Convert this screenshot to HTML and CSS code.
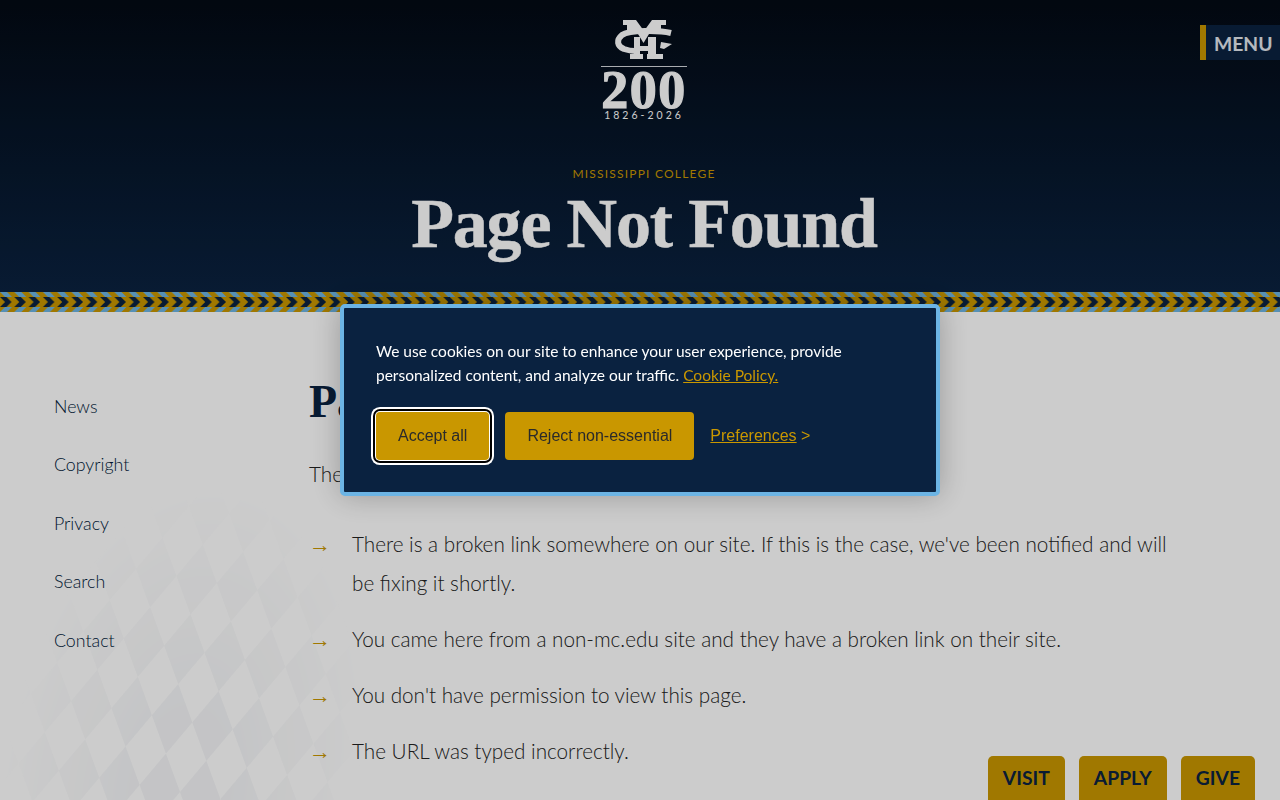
FILE: index.html
```html
<!DOCTYPE html>
<html lang="en">
<head>
  <meta charset="UTF-8">
  <title>Page Not Found - Mississippi College</title>
  <link rel="stylesheet" href="styles.css">
</head>
<body>
  <header class="hero">
    <a class="logo" href="#">
      <svg class="logo-mark" width="86" height="47" viewBox="0 0 86 47">
        <g fill="#fff">
          <path d="M22 0h13l8 11 8-11h14v5h-5v7H26V5h-4z"/>
          <path d="M33 17h6v9h8v-9h8v17h7v5H46v-5h1v-3h-8v3h3v5H29v-5h4z"/>
          <path d="M37 14h11l-5.500 9z"/>
          <path d="M60 22l11 2-8 5-4-1z"/>
          <rect x="0" y="46" width="86" height="1.400" fill="#d4d8dc"/>
        </g>
        <path d="M70 13C58 10 28 10 21 15c-6 5-5 11 2 14 3 1 6 2 11 2" fill="none" stroke="#fff" stroke-width="6"/>
      </svg>
      <div class="logo-years">200</div>
      <div class="logo-dates">1826-2026</div>
    </a>
    <div class="kicker">MISSISSIPPI COLLEGE</div>
    <h1>Page Not Found</h1>
    <a class="menu-btn" href="#">MENU</a>
  </header>

  <svg class="stripe" width="100%" height="20">
    <defs>
      <pattern id="chev" width="14.3" height="20" patternUnits="userSpaceOnUse">
        <rect width="14.3" height="20" fill="#c99700"/>
        <path d="M0 5h6.500l5 5-5 5H0l5-5z" fill="#0a2240"/>
        <path d="M0 0h7l5 5H5zM5 15h7l-5 5H0z" fill="#6cb4e4"/>
      </pattern>
    </defs>
    <rect width="100%" height="20" fill="url(#chev)"/>
  </svg>

  <div class="content">
    <div class="diamonds"></div>
    <nav class="side-nav">
      <a href="#">News</a>
      <a href="#">Copyright</a>
      <a href="#">Privacy</a>
      <a href="#">Search</a>
      <a href="#">Contact</a>
    </nav>
    <main class="main">
      <h2>Page Not Found</h2>
      <p>The page could not be found for one of these reasons:</p>
      <ul>
        <li>There is a broken link somewhere on our site. If this is the case, we've been notified and will be fixing it shortly.</li>
        <li>You came here from a non-mc.edu site and they have a broken link on their site.</li>
        <li>You don't have permission to view this page.</li>
        <li>The URL was typed incorrectly.</li>
      </ul>
    </main>
  </div>

  <div class="quick-links">
    <a href="#">VISIT</a>
    <a href="#">APPLY</a>
    <a href="#">GIVE</a>
  </div>

  <div class="overlay"></div>

  <div class="cookie-box">
    <p>We use cookies on our site to enhance your user experience, provide personalized content, and analyze our traffic. <a href="#">Cookie Policy.</a></p>
    <div class="cookie-actions">
      <button class="btn-focus">Accept all</button>
      <button>Reject non-essential</button>
      <span class="prefs"><a href="#">Preferences</a> &gt;</span>
    </div>
  </div>
</body>
</html>
```

FILE: styles.css
```css
* {
  box-sizing: border-box;
  margin: 0;
  padding: 0;
}
html, body {
  height: 800px;
  overflow: hidden;
}
body {
  background-color: #fff;
  color: #4a4a4a;
  font-family: 'Lato', sans-serif;
}
a {
  color: inherit;
  text-decoration: none;
}

.hero {
  position: relative;
  height: 292px;
  padding: 20px 0 0 8px;
  text-align: center;
  color: #fff;
  background: linear-gradient(to bottom, #030a14 0%, #0a2240 100%);
}
.logo {
  display: block;
  width: 86px;
  margin: 0 auto;
}
.logo-mark {
  display: block;
}
.logo-years {
  font-family: 'Liberation Serif', serif;
  font-weight: 700;
  font-size: 54px;
  line-height: 36px;
  margin-top: 5px;
  letter-spacing: 1.500px;
  -webkit-text-stroke: 1.2px #fff;
  white-space: nowrap;
}
.logo-dates {
  font-size: 10.500px;
  line-height: 12px;
  letter-spacing: 3px;
  margin-top: 1px;
  white-space: nowrap;
}
.kicker {
  margin-top: 46px;
  font-size: 12px;
  line-height: 14px;
  letter-spacing: 1.200px;
  color: #c99700;
}
h1 {
  font-family: 'Liberation Serif', serif;
  font-weight: 700;
  font-size: 70px;
  line-height: 80px;
  letter-spacing: -1.200px;
  margin-top: 3px;
  -webkit-text-stroke: 0.5px #fff;
}
.menu-btn {
  position: absolute;
  top: 25px;
  right: 0;
  width: 80px;
  height: 35px;
  padding-left: 8px;
  border-left: 6px solid #c99700;
  background-color: #0a2240;
  color: #e3e8ee;
  font-size: 19.300px;
  font-weight: 700;
  line-height: 37px;
  text-align: left;
}

.stripe {
  display: block;
}

.content {
  position: relative;
  display: grid;
  grid-template-columns: 255px 1fr;
  height: 488px;
  padding: 63px 100px 0 54px;
  overflow: hidden;
}
.diamonds {
  position: absolute;
  left: -320px;
  top: -20px;
  width: 1000px;
  height: 1000px;
  background: repeating-conic-gradient(#f5f6f8 0 25%, transparent 0 50%) 0 0 / 100px 100px;
  transform: rotate(10deg) scale(0.58, 1) rotate(45deg);
  -webkit-mask-image: radial-gradient(closest-side, #000 15%, transparent 62%);
  mask-image: radial-gradient(closest-side, #000 15%, transparent 62%);
}
.side-nav {
  position: relative;
  display: flex;
  flex-direction: column;
  gap: 28.500px;
  padding-top: 15.500px;
  color: #001a3a;
  font-size: 17.800px;
  font-weight: 300;
  line-height: 30px;
}
.main {
  position: relative;
  font-size: 20.700px;
  font-weight: 300;
  color: #222;
}
h2 {
  font-family: 'Liberation Serif', serif;
  font-weight: 700;
  font-size: 46px;
  line-height: 54px;
  color: #0a2240;
}
.main p {
  margin-top: 26px;
  line-height: 39px;
}
.main ul {
  list-style: none;
  margin-top: 31px;
}
.main li {
  position: relative;
  padding-left: 43px;
  margin-bottom: 17px;
  line-height: 39px;
}
.main li::before {
  content: '→';
  position: absolute;
  left: 0;
  top: 0;
  color: #c99700;
  font-family: 'Liberation Serif', serif;
  font-size: 22px;
}

.quick-links {
  position: absolute;
  right: 25px;
  bottom: 0;
  display: flex;
  gap: 14px;
}
.quick-links a {
  height: 44px;
  padding: 0 15px;
  border-radius: 5px 5px 0 0;
  background-color: #c99700;
  color: #0a2240;
  font-size: 19.300px;
  font-weight: 700;
  line-height: 44px;
}

.overlay {
  position: fixed;
  top: 0;
  left: 0;
  right: 0;
  bottom: 0;
  background-color: rgba(0,0,0,0.2);
}

.cookie-box {
  position: fixed;
  top: 304px;
  left: 340px;
  width: 600px;
  height: 192px;
  padding: 31px 32px;
  border: 4px solid #6cb4e4;
  border-radius: 5px;
  background-color: #0a2240;
  box-shadow: 0 0 30px rgba(0,0,0,0.25);
  color: #fff;
  font-size: 15.500px;
  line-height: 24px;
}
.cookie-box p a {
  color: #c99700;
  text-decoration: underline;
}
.cookie-actions {
  display: flex;
  align-items: center;
  gap: 16px;
  margin-top: 25px;
}
.cookie-actions button {
  height: 48px;
  padding: 0 22px;
  border: none;
  border-radius: 4px;
  background-color: #c99700;
  color: #2a2a2a;
  font-family: 'Liberation Sans', sans-serif;
  font-size: 16px;
}
.cookie-actions .btn-focus {
  box-shadow: 0 0 0 1px #fff, 0 0 0 3px #000, 0 0 0 5px #fff;
}
.prefs {
  color: #c99700;
  font-family: 'Liberation Sans', sans-serif;
  font-size: 16px;
}
.prefs a {
  text-decoration: underline;
}
```
